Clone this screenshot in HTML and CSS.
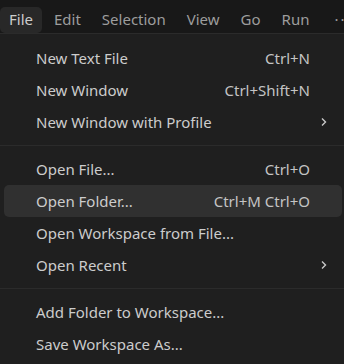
FILE: index.html
```html
<!DOCTYPE html>
<html>
<head>
<meta charset="utf-8">
<link rel="stylesheet" href="styles.css">
</head>
<body>
<div class="window">
  <div class="menubar">
    <div class="mb-item active">File</div>
    <div class="mb-item">Edit</div>
    <div class="mb-item">Selection</div>
    <div class="mb-item">View</div>
    <div class="mb-item">Go</div>
    <div class="mb-item">Run</div>
    <div class="mb-item more">···</div>
  </div>
  <div class="menu">
    <div class="row"><span class="label">New Text File</span><span class="key">Ctrl+N</span></div>
    <div class="row"><span class="label">New Window</span><span class="key">Ctrl+Shift+N</span></div>
    <div class="row"><span class="label">New Window with Profile</span><span class="sub"><svg width="8" height="10" viewBox="0 0 8 10"><path d="M2 1.5 L5.5 5 L2 8.5" fill="none" stroke="#c8c8c8" stroke-width="1.4"/></svg></span></div>
    <div class="sep"></div>
    <div class="row"><span class="label">Open File...</span><span class="key">Ctrl+O</span></div>
    <div class="row hl"><span class="label">Open Folder...</span><span class="key">Ctrl+M Ctrl+O</span></div>
    <div class="row"><span class="label">Open Workspace from File...</span></div>
    <div class="row"><span class="label">Open Recent</span><span class="sub"><svg width="8" height="10" viewBox="0 0 8 10"><path d="M2 1.5 L5.5 5 L2 8.5" fill="none" stroke="#c8c8c8" stroke-width="1.4"/></svg></span></div>
    <div class="sep"></div>
    <div class="row"><span class="label">Add Folder to Workspace...</span></div>
    <div class="row"><span class="label">Save Workspace As...</span></div>
  </div>
</div>
</body>
</html>
```
FILE: styles.css
```css
html, body {
  margin: 0;
  padding: 0;
  background: #1f1f1f;
}
.window {
  width: 344px;
  height: 364px;
  overflow: hidden;
  font-family: "Noto Sans", "Open Sans", sans-serif;
  font-size: 15px;
  color: #cccccc;
}
.menubar {
  height: 34px;
  background: #181818;
  border-bottom: 1px solid #2b2b2b;
  display: flex;
  align-items: flex-end;
  box-sizing: border-box;
  white-space: nowrap;
}
.mb-item {
  height: 26px;
  line-height: 25px;
  padding: 0 9px;
  margin-right: 3px;
  color: #9d9d9d;
  border-radius: 5px;
  box-sizing: border-box;
}
.mb-item.active {
  background: #282828;
  color: #cccccc;
}
.mb-item.more {
  letter-spacing: 2px;
  padding-left: 13px;
}
.menu {
  padding: 8px 2px 0 4px;
}
.row {
  height: 32px;
  display: flex;
  align-items: center;
  padding: 0 0 0 32px;
  border-radius: 5px;
  white-space: nowrap;
}
.row.hl {
  background: #303030;
}
.label {
  flex: 1;
}
.key {
  margin-right: 32px;
  color: #c4c4c4;
}
.sub {
  display: flex;
  margin-right: 14px;
}
.sep {
  height: 1px;
  background: #2b2b2b;
  margin: 7px -4px 7px -4px;
}
```
